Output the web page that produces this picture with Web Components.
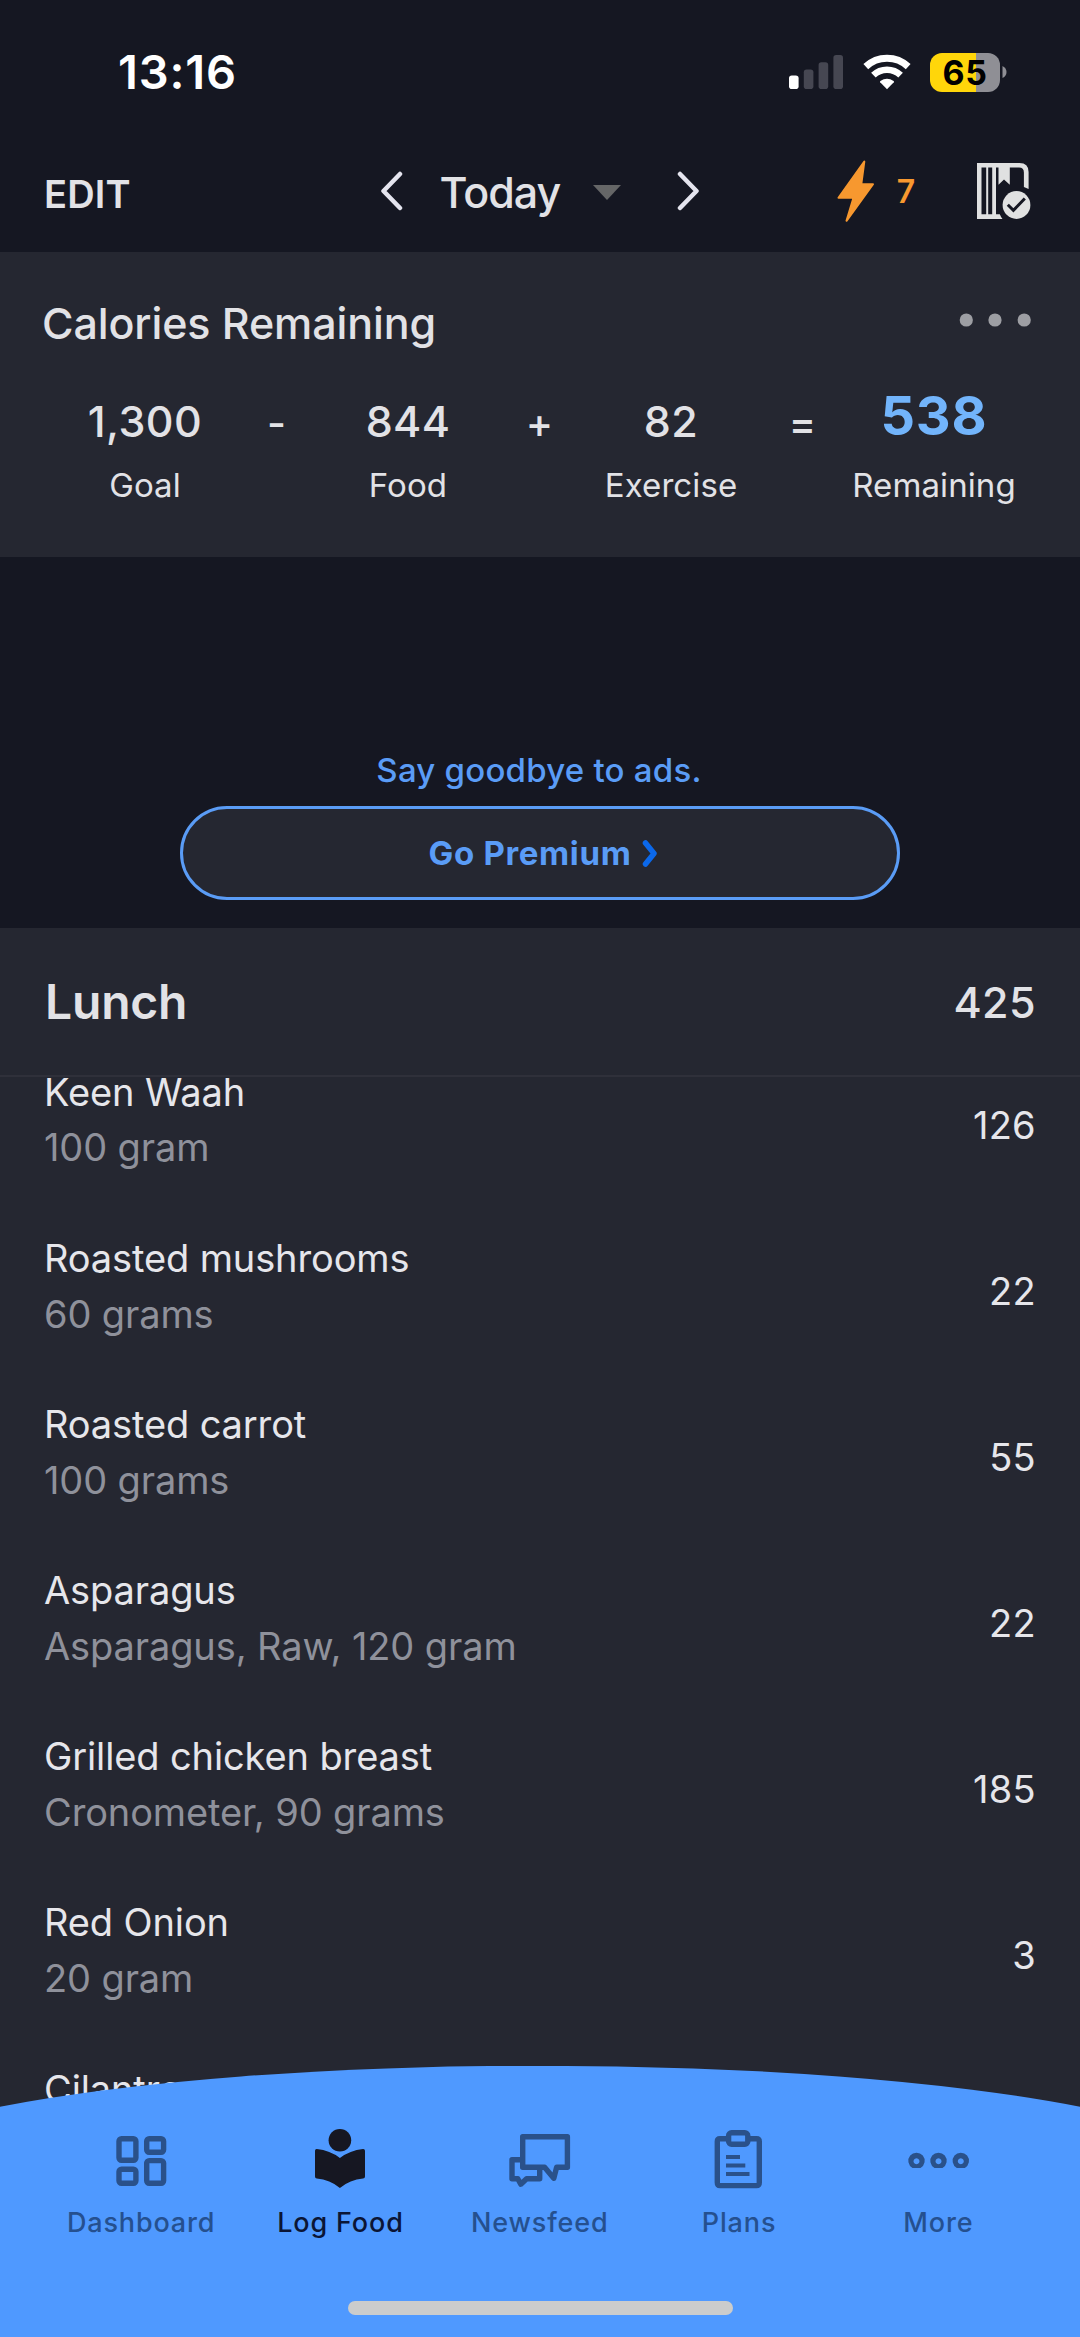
<!DOCTYPE html>
<html lang="en">
<head>
<meta charset="utf-8">
<title>Food diary</title>
<style>
  html, body { margin: 0; }
  body { background: #151722; font-family: Inter, "Liberation Sans", sans-serif; color: #e2e2e6; }
</style>
</head>
<body>
<diary-app></diary-app>

<script>
const define = (name, html) => {
  const template = document.createElement('template');
  template.innerHTML = html;
  customElements.define(name, class extends HTMLElement {
    connectedCallback() {
      if (this.shadowRoot) return;
      this.attachShadow({ mode: 'open' }).append(template.content.cloneNode(true));
    }
  });
};

define('status-bar', `
  <style>
    :host { display: flex; align-items: center; justify-content: space-between; height: 144px; padding: 0 73px 0 118px; box-sizing: border-box; }
    .time { font-size: 47px; font-weight: 600; letter-spacing: .84px; color: #fff; line-height: 60px; }
    .right { display: flex; align-items: center; }
    svg { display: block; }
    .wifi { margin: 0 19px 0 20px; }
    .battery { width: 70px; height: 39px; border-radius: 12px; background: linear-gradient(90deg, #ffd60a 46px, #8f8f95 46px);
      display: flex; align-items: center; justify-content: center; color: #000; font-size: 34px; font-weight: 700; letter-spacing: .6px; line-height: 39px; }
    .nub { margin-left: 2px; }
  </style>
  <span class="time">13:16</span>
  <div class="right">
    <svg width="54" height="36" viewBox="0 0 54 36">
      <rect x="0" y="21.500" width="9.600" height="13.500" rx="2.800" fill="#fff"/>
      <g fill="#464752"><rect x="14.800" y="15.500" width="9.600" height="19.500" rx="2.800"/><rect x="29.600" y="8.300" width="9.600" height="26.700" rx="2.800"/><rect x="44.400" y="1" width="9.600" height="34" rx="2.800"/></g>
    </svg>
    <svg class="wifi" width="48" height="36" viewBox="0 0 48 36">
      <g fill="none" stroke="#fff" stroke-width="6.600">
        <path d="M2.800 12.600A31 31 0 0 1 45.200 12.600" stroke-width="7"/>
        <path d="M10.400 21.200A19.600 19.600 0 0 1 37.600 21.200"/>
      </g>
      <path d="M24 35.200L17.200 28.200Q16.700 27.500 17.400 27Q24 22.300 30.600 27Q31.300 27.500 30.800 28.200Z" fill="#fff"/>
    </svg>
    <div class="battery">65</div>
    <svg class="nub" width="5" height="14" viewBox="0 0 5 14"><path d="M.5 1Q4.500 3 4.500 7T.5 13Z" fill="#8f8f95"/></svg>
  </div>`);

define('diary-nav', `
  <style>
    :host { display: grid; grid-template-columns: 1fr 320px 1fr; align-items: center; height: 94px; padding: 0 49px 14px 44px; color: #e2e2e6; }
    .edit { font-size: 38px; font-weight: 600; letter-spacing: .18px; line-height: 50px; padding-top: 6px; }
    .date { display: flex; align-items: center; width: 320px; margin-left: 2px; }
    .today { width: 122px; margin: 1px 31px 0 36px; font-size: 43px; font-weight: 500; letter-spacing: -1px; line-height: 56px; white-space: nowrap; }
    .next { margin-left: 55px; }
    svg { display: block; flex: none; }
    .right { display: flex; align-items: center; justify-content: flex-end; }
    .streak { width: 79.600px; padding: 2px 0 0 21.400px; box-sizing: border-box; margin-right: 21px; color: #f7982f; font-size: 32px; font-weight: 600; line-height: 40px; }
  </style>
  <span class="edit">EDIT</span>
  <div class="date">
    <svg width="24" height="40" viewBox="0 0 24 40"><path d="M20 3L3.500 20L20 37" fill="none" stroke="#e4e4ee" stroke-width="4.500" stroke-linecap="round" stroke-linejoin="round"/></svg>
    <span class="today">Today</span>
    <svg width="28" height="15" viewBox="0 0 28 15" style="margin-top:3px"><path d="M0 0H28L14 15Z" fill="#656667"/></svg>
    <svg class="next" width="24" height="40" viewBox="0 0 24 40"><path d="M4 3L20.500 20L4 37" fill="none" stroke="#e4e4ee" stroke-width="4.500" stroke-linecap="round" stroke-linejoin="round"/></svg>
  </div>
  <div class="right">
    <svg width="38" height="64" viewBox="837 159 38 64"><path d="M864.300 161.500L861.300 184.200H873L846.500 220.800L853.500 197.800H838.500Z" fill="#f7982f" stroke="#f7982f" stroke-width="2" stroke-linejoin="round"/></svg>
    <span class="streak">7</span>
    <svg width="55" height="58" viewBox="976 161 55 58">
      <g fill="#e0e1e1">
        <path d="M977 162H1019.500Q1028.600 162 1028.600 171V188L1023.900 186V171.500Q1023.900 166.600 1019 166.600H981.500V213.300H999.800Q1000.800 216 1002.500 218H977Z"/>
        <path d="M986.200 164H988.200V216H986.200ZM992.200 164H996V216H992.200Z"/>
        <path d="M998.500 164H1009.800V183.800L1004 178.600L998.500 183.800Z"/>
        <circle cx="1016.500" cy="204" r="13.900"/>
      </g>
      <path d="M1007.800 203.700L1013.400 209.300L1024.800 197.500" fill="none" stroke="#151722" stroke-width="3"/>
    </svg>
  </div>`);

define('calorie-term', `
  <style>
    :host { display: flex; flex-direction: column; align-items: center; width: 210px; }
    .value { height: 60px; line-height: 58px; font-size: 43px; font-weight: 500; letter-spacing: .4px; }
    :host([strong]) .value { font-size: 54px; font-weight: 700; line-height: 47px; letter-spacing: .8px; color: #72b4fb; }
    .label { margin-top: 12.600px; font-size: 33px; line-height: 40px; letter-spacing: .1px; }
  </style>
  <div class="value"><slot name="value"></slot></div>
  <div class="label"><slot></slot></div>`);

define('calorie-summary', `
  <style>
    :host { display: block; height: 305px; padding: 41px 41px 0 40px; box-sizing: border-box; background: #252731; }
    header { display: flex; justify-content: space-between; align-items: center; height: 60px; padding: 0 8px 0 2px; }
    h2 { margin: 0; font-size: 43px; font-weight: 500; letter-spacing: -.1px; line-height: 60px; }
    .dots { margin-bottom: 6px; display: block; }
    .terms { display: flex; margin-top: 39.400px; }
    .op { width: 53px; text-align: center; font-size: 41px; font-weight: 500; line-height: 60px; padding-top: 1px; }
  </style>
  <header>
    <h2>Calories Remaining</h2>
    <svg class="dots" width="72" height="14" viewBox="0 0 72 14" fill="#9d9ea3"><circle cx="7.300" cy="7" r="6.600"/><circle cx="36" cy="7" r="6.600"/><circle cx="65.200" cy="7" r="6.600"/></svg>
  </header>
  <div class="terms">
    <calorie-term><span slot="value">1,300</span>Goal</calorie-term>
    <span class="op">-</span>
    <calorie-term><span slot="value">844</span>Food</calorie-term>
    <span class="op">+</span>
    <calorie-term><span slot="value">82</span>Exercise</calorie-term>
    <span class="op">=</span>
    <calorie-term strong><span slot="value">538</span>Remaining</calorie-term>
  </div>`);

define('premium-banner', `
  <style>
    :host { display: flex; flex-direction: column; align-items: center; height: 370.500px; padding-top: 193px; box-sizing: border-box; color: #5a9cf6; font-size: 33px; }
    p { margin: 0 2px 0 0; font-weight: 500; letter-spacing: .23px; line-height: 40px; }
    button { all: unset; margin-top: 16px; width: 720px; height: 94px; box-sizing: border-box; border: 3px solid #5a9cf6; border-radius: 47px; background: #252731;
      display: flex; align-items: center; justify-content: center; gap: 11px; padding-left: 7px; font-weight: 700; letter-spacing: .66px; }
  </style>
  <p>Say goodbye to ads.</p>
  <button>Go Premium<svg width="16" height="28" viewBox="0 0 16 28"><path d="M3.500 4L12 14.500L3.500 25" fill="none" stroke="#0b68ea" stroke-width="5.500" stroke-linecap="round" stroke-linejoin="round"/></svg></button>`);

define('meal-header', `
  <style>
    :host { display: flex; justify-content: space-between; align-items: center; height: 149.500px; padding: 2px 45px 0; box-sizing: border-box; background: #252731; border-bottom: 2px solid #2f303a; }
    .name { font-size: 48px; font-weight: 600; letter-spacing: -.2px; line-height: 60px; }
    .total { font-size: 43px; font-weight: 500; letter-spacing: .4px; line-height: 60px; margin-right: -1px; }
  </style>
  <span class="name"><slot></slot></span><span class="total"><slot name="total"></slot></span>`);

define('food-row', `
  <style>
    :host { display: flex; justify-content: space-between; align-items: center; height: 166.100px; padding: 0 44px; box-sizing: border-box; font-size: 38px; line-height: 55.500px; letter-spacing: -.12px; color: #e6e6eb; }
    .detail { color: #8f919b; min-height: 55.500px; }
    .kcal { letter-spacing: .3px; padding-top: 10px; }
  </style>
  <div><div><slot></slot></div><div class="detail"><slot name="detail"></slot></div></div>
  <span class="kcal"><slot name="kcal"></slot></span>`);

define('food-list', `
  <style>
    :host { display: block; flex: 1; min-height: 0; overflow: hidden; background: #252731; }
    .scroller { margin-top: -39.600px; }
  </style>
  <div class="scroller"><slot></slot></div>`);

define('tab-item', `
  <style>
    :host { display: flex; flex-direction: column; align-items: center; width: 199.300px; color: #25508f; font-size: 27px; font-weight: 500; letter-spacing: .85px; line-height: 34px; }
    :host([active]) { color: #0b1535; }
    ::slotted(svg) { display: block; margin-bottom: 13.500px; }
  </style>
  <slot name="icon"></slot><span><slot></slot></span>`);

define('tab-bar', `
  <style>
    :host { display: block; position: relative; z-index: 1; height: 271.300px; margin-top: -41px; background: #4f99ff; flex: none;
      clip-path: path('M0 41A697 111.600 0 0 1 1080 41V272H0Z'); }
    nav { display: flex; padding: 62.300px 0 0 41.500px; }
    .home { width: 385px; height: 14px; margin: 61.500px auto 0; border-radius: 7px; background: #cbcccc; }
  </style>
  <nav>
    <tab-item>
      <svg slot="icon" width="80" height="64" viewBox="0 0 80 64" fill="none" stroke="#2a518a" stroke-width="5.400">
        <rect x="18" y="10.700" width="16.900" height="21.600" rx="2.500"/><rect x="45.700" y="10.700" width="16.900" height="13.600" rx="2.500"/>
        <rect x="18" y="41.300" width="16.900" height="14" rx="2.500"/><rect x="45.700" y="32.600" width="16.900" height="22.700" rx="2.500"/>
      </svg>Dashboard</tab-item>
    <tab-item active>
      <svg slot="icon" width="80" height="64" viewBox="0 0 80 64" fill="#161722">
        <circle cx="39.900" cy="12.300" r="11.300"/>
        <path d="M16.800 21Q30 22.300 39.900 30Q50 22.300 63 21Q65 20.900 65 22.800V48.500Q65 50.500 63 50.600Q50 51.800 39.900 60Q30 51.800 16.800 50.600Q15 50.500 15 48.500V22.800Q15 20.900 16.800 21Z"/>
      </svg>Log Food</tab-item>
    <tab-item>
      <svg slot="icon" width="80" height="64" viewBox="0 0 80 64" fill="none" stroke="#2a518a" stroke-width="5.400" stroke-linejoin="round">
        <path d="M22.700 8.700H67.400V39.300H56.600L53.800 50.300L44.600 39.300H22.700Z"/>
        <path d="M22 31.700H12V50.700H17.800L20.800 56.200L26.600 50.700H39.700V41"/>
      </svg>Newsfeed</tab-item>
    <tab-item>
      <svg slot="icon" width="80" height="64" viewBox="0 0 80 64" fill="none" stroke="#2a518a" stroke-width="5.400">
        <path d="M29 10.700H21Q18.300 10.700 18.300 13.500V54.500Q18.300 57.600 21 57.600H57.500Q60.300 57.600 60.300 54.500V13.500Q60.300 10.700 57.500 10.700H50"/>
        <rect x="29.600" y="4.700" width="19.200" height="11.600" rx="3"/>
        <path d="M27 29H41M27 37.500H46.300M27 46H50.500" stroke-width="4.200"/>
      </svg>Plans</tab-item>
    <tab-item>
      <svg slot="icon" width="80" height="64" viewBox="0 0 80 64">
        <path fill="#2a518a" fill-rule="evenodd" d="M14.500 40A8.200 8.200 0 1 1 22.500 40ZM18.500 30.300a3 3 0 1 0 .01 0ZM36.500 40A8.200 8.200 0 1 1 44.500 40ZM40.500 30.300a3 3 0 1 0 .01 0ZM58.800 40A8.200 8.200 0 1 1 66.800 40ZM62.800 30.300a3 3 0 1 0 .01 0Z"/>
      </svg>More</tab-item>
  </nav>
  <div class="home"></div>`);

define('diary-app', `
  <style>
    :host { display: flex; flex-direction: column; width: 1080px; height: 2337px; overflow: hidden; background: #151722; }
    status-bar, diary-nav, calorie-summary, premium-banner, meal-header { flex: none; }
  </style>
  <status-bar></status-bar>
  <diary-nav></diary-nav>
  <calorie-summary></calorie-summary>
  <premium-banner></premium-banner>
  <meal-header>Lunch<span slot="total">425</span></meal-header>
  <food-list>
    <food-row>Keen Waah<span slot="detail">100 gram</span><span slot="kcal">126</span></food-row>
    <food-row>Roasted mushrooms<span slot="detail">60 grams</span><span slot="kcal">22</span></food-row>
    <food-row>Roasted carrot<span slot="detail">100 grams</span><span slot="kcal">55</span></food-row>
    <food-row>Asparagus<span slot="detail">Asparagus, Raw, 120 gram</span><span slot="kcal">22</span></food-row>
    <food-row>Grilled chicken breast<span slot="detail">Cronometer, 90 grams</span><span slot="kcal">185</span></food-row>
    <food-row>Red Onion<span slot="detail">20 gram</span><span slot="kcal">3</span></food-row>
    <food-row>Cilantro</food-row>
  </food-list>
  <tab-bar></tab-bar>`);
</script>
</body>
</html>
